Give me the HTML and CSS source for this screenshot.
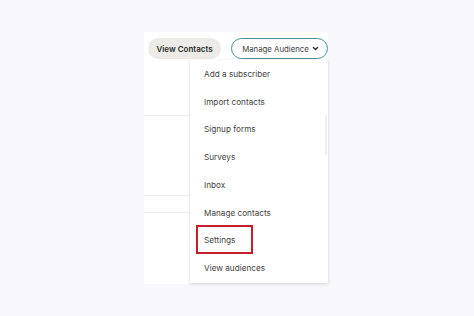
FILE: index.html
```html
<!DOCTYPE html>
<html>
<head>
<meta charset="utf-8">
<link rel="stylesheet" href="styles.css">
</head>
<body>
<div class="stage">
  <div class="panel">
    <div class="toolbar">
      <button class="btn-view">View Contacts</button>
      <button class="btn-manage">Manage Audience
        <svg class="chev" viewBox="0 0 10 10" width="7" height="7"><path d="M2 3.5 L5 6.5 L8 3.5" fill="none" stroke="#2a2a2a" stroke-width="1.8" stroke-linecap="round" stroke-linejoin="round"/></svg>
      </button>
    </div>
    <div class="rows">
      <div class="row r1"></div>
      <div class="row r2"></div>
      <div class="row r3"></div>
      <div class="row r4"></div>
    </div>
    <div class="menu">
      <div class="item">Add a subscriber</div>
      <div class="item">Import contacts</div>
      <div class="item">Signup forms</div>
      <div class="item">Surveys</div>
      <div class="item">Inbox</div>
      <div class="item">Manage contacts</div>
      <div class="item"><span class="hl">Settings</span></div>
      <div class="item">View audiences</div>
      <div class="scroll"></div>
    </div>
  </div>
</div>
</body>
</html>
```
FILE: styles.css
```css
html, body {
  margin: 0;
  padding: 0;
  background: #f8f7fc;
  font-family: Inter, "Liberation Sans", sans-serif;
}
.stage {
  width: 474px;
  height: 316px;
  padding: 32px 0 0 144px;
  box-sizing: border-box;
}
.panel {
  position: relative;
  width: 184px;
  height: 252px;
  background: #ffffff;
  display: flex;
  flex-direction: column;
}
.toolbar {
  display: flex;
  align-items: center;
  gap: 10px;
  padding: 6px 0 0 4px;
  height: 21px;
}
.btn-view {
  height: 21px;
  width: 73px;
  border: none;
  border-radius: 11px;
  background: #ecebe7;
  font-family: inherit;
  font-weight: 600;
  font-size: 8px;
  color: #2b2b2b;
  padding: 0;
}
.btn-manage {
  height: 21px;
  width: 97px;
  border: 1.5px solid #4b8d97;
  border-radius: 11px;
  background: #ffffff;
  font-family: inherit;
  font-size: 7.8px;
  color: #3f3f3f;
  padding: 0 0 0 2px;
  display: flex;
  align-items: center;
  justify-content: center;
  gap: 3px;
  box-sizing: border-box;
}
.chev { display: block; }
.rows {
  display: flex;
  flex-direction: column;
  margin-top: 56px;
}
.row { border-top: 1px solid #efeff1; }
.r1 { height: 79px; }
.r2 { height: 16px; }
.r3 { height: 72px; }
.r4 { height: 0; border-top: none; }
.menu {
  position: absolute;
  left: 46px;
  top: 28px;
  width: 138px;
  height: 223px;
  background: #ffffff;
  box-shadow: 0 1px 3px rgba(0,0,0,0.18);
  display: flex;
  flex-direction: column;
  box-sizing: border-box;
}
.item {
  height: 27.8px;
  display: flex;
  align-items: center;
  padding-left: 14px;
  font-size: 8.2px;
  color: #444444;
  flex: none;
}
.hl {
  display: inline-flex;
  align-items: center;
  box-sizing: border-box;
  margin-left: -8px;
  margin-top: -2px;
  padding-left: 6px;
  width: 57px;
  height: 29px;
  border: 2px solid #c41f2b;
}
.scroll {
  position: absolute;
  right: 1px;
  top: 55px;
  width: 2px;
  height: 40px;
  background: #efefef;
}
```
